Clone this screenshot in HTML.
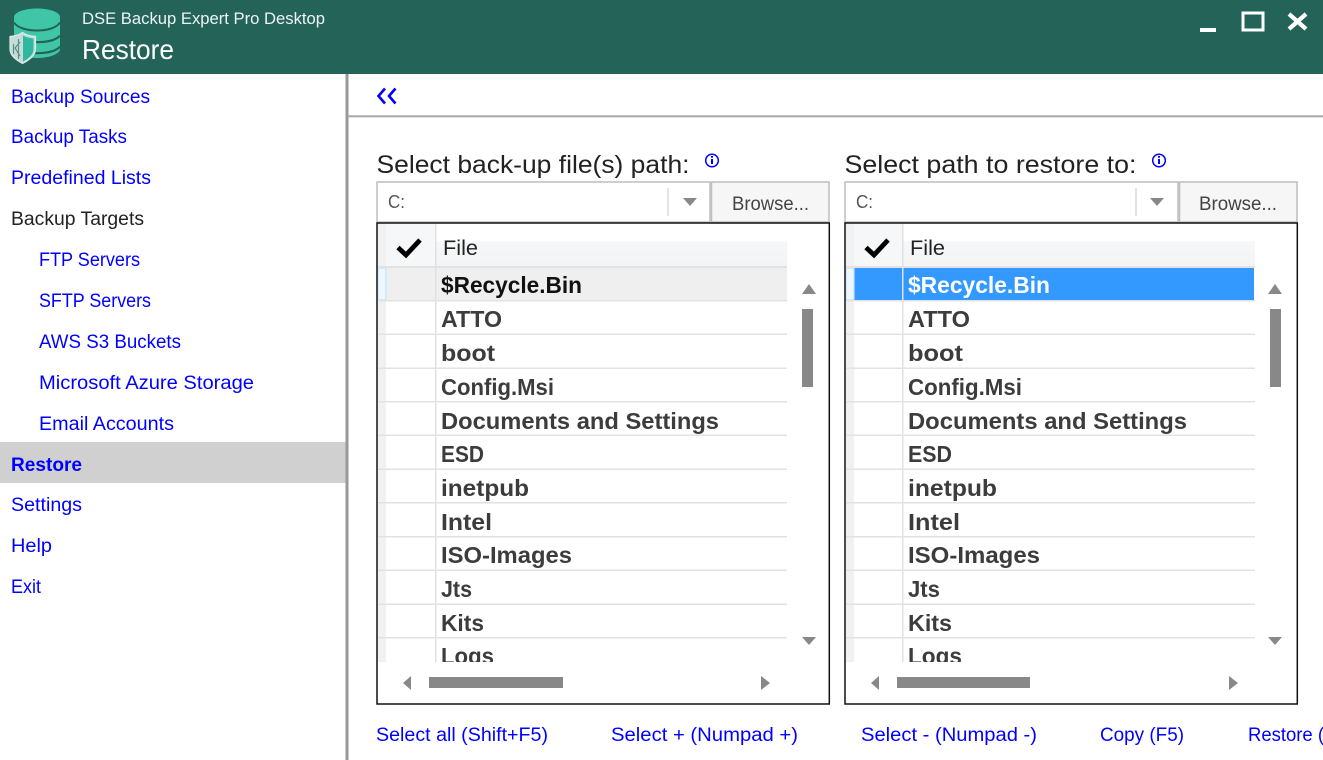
<!DOCTYPE html>
<html><head><meta charset="utf-8"><title>Restore</title>
<style>
html,body{margin:0;padding:0;background:#fff;width:1323px;height:760px;overflow:hidden}
svg{display:block;font-family:"Liberation Sans",sans-serif}
.n{font-size:19px;fill:#0000ff}
.r{font-size:23px;font-weight:bold;fill:#3c3c3c}
.sep{fill:#e2e2e2}
.g{fill:#888}
</style></head><body>
<svg width="1323" height="760" viewBox="0 0 1323 760" xmlns="http://www.w3.org/2000/svg">
<defs>
<linearGradient id="hd" x1="0" y1="0" x2="0" y2="1"><stop offset="0" stop-color="#fff"/><stop offset=".38" stop-color="#fff"/><stop offset=".42" stop-color="#f6f7f8"/><stop offset="1" stop-color="#f3f4f5"/></linearGradient>
<clipPath id="cl"><rect x="378" y="224" width="409" height="438"/></clipPath>
<clipPath id="cr"><rect x="846" y="224" width="409" height="438"/></clipPath>
</defs>
<rect width="1323" height="74" fill="#236358"/>
<!-- logo -->
<path d="M14 17C14 12 25 8.500 37 8.500S60 12 60 17V49C60 54 49 58 37 58S14 54 14 49Z" fill="#3fc6a6"/>
<path d="M14 22.500C18 28.500 28 30.500 37 30.500S56 28.500 60 22.500" fill="none" stroke="#236358" stroke-width="2"/>
<path d="M30 41.500C33 42 35 42.200 37 42.200C46 42.200 56 40.500 60 35.500" fill="none" stroke="#236358" stroke-width="2.200"/>
<path d="M30 52.500C33 53 35 53.200 37 53.200C46 53.200 56 51.500 60 46.500" fill="none" stroke="#236358" stroke-width="2.200"/>
<path d="M10 36.500C16 36 20 34.500 22.500 32.500C25 34.500 29 36 35.500 36.500V49C35.500 56 28 60.500 22.500 63.500C17 60.500 10 56 10 49Z" fill="#c4dcd8" stroke="#dcebe8" stroke-width="1.200"/>
<path d="M23 35.500C25.500 37 29 38 33.500 38.500V49C33.500 55 28 59 23 61.500Z" fill="#2fb8a0"/>
<path d="M13.500 44V54M20 42L15 48L20 56M18.500 39V59" stroke="#5f8f88" stroke-width="1.200" fill="none"/>
<text x="82" y="24" font-size="17" fill="#eef4f3" textLength="243" lengthAdjust="spacingAndGlyphs">DSE Backup Expert Pro Desktop</text>
<text x="82" y="59" font-size="28" fill="#fff" textLength="92" lengthAdjust="spacingAndGlyphs">Restore</text>
<rect x="1200" y="28" width="16" height="4" fill="#fff"/>
<path d="M1243 13H1263V30H1243Z" fill="none" stroke="#fff" stroke-width="3"/>
<path d="M1289 14L1306 29M1306 14L1289 29" stroke="#fff" stroke-width="4.200" fill="none"/>
<!-- sidebar -->
<rect x="0" y="442" width="346" height="41" fill="#d0d0d0"/>
<rect x="345.500" y="74" width="3" height="686" fill="#999"/>
<text class="n" x="11" y="103" textLength="139" lengthAdjust="spacingAndGlyphs">Backup Sources</text>
<text class="n" x="11" y="143" textLength="116" lengthAdjust="spacingAndGlyphs">Backup Tasks</text>
<text class="n" x="11" y="184" textLength="140" lengthAdjust="spacingAndGlyphs">Predefined Lists</text>
<text class="n" x="11" y="225" textLength="133" lengthAdjust="spacingAndGlyphs" style="fill:#222">Backup Targets</text>
<text class="n" x="39" y="266" textLength="101" lengthAdjust="spacingAndGlyphs">FTP Servers</text>
<text class="n" x="39" y="307" textLength="112" lengthAdjust="spacingAndGlyphs">SFTP Servers</text>
<text class="n" x="39" y="348" textLength="142" lengthAdjust="spacingAndGlyphs">AWS S3 Buckets</text>
<text class="n" x="39" y="389" textLength="215" lengthAdjust="spacingAndGlyphs">Microsoft Azure Storage</text>
<text class="n" x="39" y="430" textLength="135" lengthAdjust="spacingAndGlyphs">Email Accounts</text>
<text class="n" x="11" y="471" textLength="71" lengthAdjust="spacingAndGlyphs" font-weight="bold">Restore</text>
<text class="n" x="11" y="511" textLength="71" lengthAdjust="spacingAndGlyphs">Settings</text>
<text class="n" x="11" y="552" textLength="41" lengthAdjust="spacingAndGlyphs">Help</text>
<text class="n" x="11" y="593" textLength="30" lengthAdjust="spacingAndGlyphs">Exit</text>
<!-- top toolbar -->
<rect x="348" y="115.300" width="975" height="2" fill="#a8a8a8"/>
<path d="M385 88.500L378.500 96L385 103.500M395.500 88.500L389 96L395.500 103.500" fill="none" stroke="#0000ff" stroke-width="2.600"/>
<!-- labels -->
<text x="376.500" y="173" font-size="25" fill="#222" textLength="313" lengthAdjust="spacingAndGlyphs">Select back-up file(s) path:</text>
<text x="844.500" y="173" font-size="25" fill="#222" textLength="292" lengthAdjust="spacingAndGlyphs">Select path to restore to:</text>
<circle cx="712" cy="160.500" r="6.300" fill="#fff" stroke="#0000ff" stroke-width="1.500"/>
<path d="M712 156v1.800M712 159v5" stroke="#0000ff" stroke-width="2"/>
<circle cx="1159" cy="160.500" r="6.300" fill="#fff" stroke="#0000ff" stroke-width="1.500"/>
<path d="M1159 156v1.800M1159 159v5" stroke="#0000ff" stroke-width="2"/>
<!-- combos -->
<rect x="377" y="182" width="333" height="40" fill="#fff" stroke="#bdbdbd" stroke-width="1.500"/>
<rect x="711.500" y="182" width="117.500" height="40" fill="#f6f6f6" stroke="#bdbdbd" stroke-width="1.500"/>
<text x="388" y="208" font-size="18" fill="#555" textLength="17" lengthAdjust="spacingAndGlyphs">C:</text>
<rect x="667" y="188" width="2" height="28" fill="#e4e4e4"/>
<path d="M683 198H697L690 206Z" class="g"/>
<text x="732" y="210" font-size="19" fill="#444" textLength="77" lengthAdjust="spacingAndGlyphs">Browse...</text>
<rect x="845" y="182" width="333" height="40" fill="#fff" stroke="#bdbdbd" stroke-width="1.500"/>
<rect x="1179.500" y="182" width="117.500" height="40" fill="#f6f6f6" stroke="#bdbdbd" stroke-width="1.500"/>
<text x="856" y="208" font-size="18" fill="#555" textLength="17" lengthAdjust="spacingAndGlyphs">C:</text>
<rect x="1135" y="188" width="2" height="28" fill="#e4e4e4"/>
<path d="M1150 198H1164L1157 206Z" class="g"/>
<text x="1199" y="210" font-size="19" fill="#444" textLength="78" lengthAdjust="spacingAndGlyphs">Browse...</text>
<!-- LEFT GRID -->
<rect x="377" y="223" width="452.300" height="481" fill="#fff" stroke="#111" stroke-width="1.500"/>
<g clip-path="url(#cl)">
<rect x="378" y="224" width="8" height="438" fill="#f1f1f1"/>
<rect x="386" y="224" width="402" height="43" fill="url(#hd)"/>
<rect x="386" y="224" width="49" height="43" fill="#f6f7f8"/>
<rect x="387" y="268" width="400" height="32" fill="#efefef"/>
<rect x="378" y="268" width="8" height="32" fill="#eef7fd" stroke="#bfe3f7" stroke-width="1.200"/>
<rect x="435" y="224" width="1.500" height="438" fill="#e0e0e0"/>
<path d="M398 247.500L406 255L420 240" fill="none" stroke="#000" stroke-width="4.800"/>
<text x="443" y="255" font-size="21" fill="#222" textLength="35" lengthAdjust="spacingAndGlyphs">File</text>
<rect class="sep" x="378" y="266" width="410" height="2"/>
<rect class="sep" x="378" y="300" width="410" height="1.500"/>
<rect class="sep" x="378" y="333.500" width="410" height="1.500"/>
<rect class="sep" x="378" y="367.500" width="410" height="1.500"/>
<rect class="sep" x="378" y="401" width="410" height="1.500"/>
<rect class="sep" x="378" y="434.500" width="410" height="1.500"/>
<rect class="sep" x="378" y="468.500" width="410" height="1.500"/>
<rect class="sep" x="378" y="502" width="410" height="1.500"/>
<rect class="sep" x="378" y="536" width="410" height="1.500"/>
<rect class="sep" x="378" y="569.500" width="410" height="1.500"/>
<rect class="sep" x="378" y="603.500" width="410" height="1.500"/>
<rect class="sep" x="378" y="637" width="410" height="1.500"/>
<text class="r" x="441" y="293" textLength="141" lengthAdjust="spacingAndGlyphs" style="fill:#111">$Recycle.Bin</text>
<text class="r" x="441" y="327" textLength="61" lengthAdjust="spacingAndGlyphs">ATTO</text>
<text class="r" x="441" y="361" textLength="54" lengthAdjust="spacingAndGlyphs">boot</text>
<text class="r" x="441" y="395" textLength="113" lengthAdjust="spacingAndGlyphs">Config.Msi</text>
<text class="r" x="441" y="429" textLength="278" lengthAdjust="spacingAndGlyphs">Documents and Settings</text>
<text class="r" x="441" y="462" textLength="43" lengthAdjust="spacingAndGlyphs">ESD</text>
<text class="r" x="441" y="496" textLength="88" lengthAdjust="spacingAndGlyphs">inetpub</text>
<text class="r" x="441" y="530" textLength="51" lengthAdjust="spacingAndGlyphs">Intel</text>
<text class="r" x="441" y="563" textLength="131" lengthAdjust="spacingAndGlyphs">ISO-Images</text>
<text class="r" x="441" y="597" textLength="31" lengthAdjust="spacingAndGlyphs">Jts</text>
<text class="r" x="441" y="631" textLength="43" lengthAdjust="spacingAndGlyphs">Kits</text>
<text class="r" x="441" y="664" textLength="53" lengthAdjust="spacingAndGlyphs">Logs</text>
</g>
<path d="M802 294H816L809 284Z" class="g"/>
<rect x="802" y="309" width="11" height="78" class="g"/>
<path d="M802 637H816L809 645Z" class="g"/>
<path d="M411 676V690L403 683Z" class="g"/>
<rect x="429" y="677" width="134" height="11" class="g"/>
<path d="M761 676V690L770 683Z" class="g"/>
<!-- RIGHT GRID -->
<rect x="845" y="223" width="452.300" height="481" fill="#fff" stroke="#111" stroke-width="1.500"/>
<g clip-path="url(#cr)">
<rect x="846" y="224" width="8" height="438" fill="#f1f1f1"/>
<rect x="854" y="224" width="402" height="43" fill="url(#hd)"/>
<rect x="854" y="224" width="49" height="43" fill="#f6f7f8"/>
<rect x="854" y="268" width="400" height="32" fill="#3399ff"/>
<rect x="846" y="268" width="8" height="32" fill="#eef7fd" stroke="#bfe3f7" stroke-width="1.200"/>
<rect x="902" y="224" width="1.500" height="438" fill="#e0e0e0"/>
<path d="M866 247.500L874 255L888 240" fill="none" stroke="#000" stroke-width="4.800"/>
<text x="910" y="255" font-size="21" fill="#222" textLength="35" lengthAdjust="spacingAndGlyphs">File</text>
<rect class="sep" x="846" y="266" width="410" height="2"/>
<rect class="sep" x="846" y="300" width="410" height="1.500"/>
<rect class="sep" x="846" y="333.500" width="410" height="1.500"/>
<rect class="sep" x="846" y="367.500" width="410" height="1.500"/>
<rect class="sep" x="846" y="401" width="410" height="1.500"/>
<rect class="sep" x="846" y="434.500" width="410" height="1.500"/>
<rect class="sep" x="846" y="468.500" width="410" height="1.500"/>
<rect class="sep" x="846" y="502" width="410" height="1.500"/>
<rect class="sep" x="846" y="536" width="410" height="1.500"/>
<rect class="sep" x="846" y="569.500" width="410" height="1.500"/>
<rect class="sep" x="846" y="603.500" width="410" height="1.500"/>
<rect class="sep" x="846" y="637" width="410" height="1.500"/>
<text class="r" x="908" y="293" textLength="142" lengthAdjust="spacingAndGlyphs" style="fill:#fff">$Recycle.Bin</text>
<text class="r" x="908" y="327" textLength="62" lengthAdjust="spacingAndGlyphs">ATTO</text>
<text class="r" x="908" y="361" textLength="55" lengthAdjust="spacingAndGlyphs">boot</text>
<text class="r" x="908" y="395" textLength="114" lengthAdjust="spacingAndGlyphs">Config.Msi</text>
<text class="r" x="908" y="429" textLength="279" lengthAdjust="spacingAndGlyphs">Documents and Settings</text>
<text class="r" x="908" y="462" textLength="44" lengthAdjust="spacingAndGlyphs">ESD</text>
<text class="r" x="908" y="496" textLength="89" lengthAdjust="spacingAndGlyphs">inetpub</text>
<text class="r" x="908" y="530" textLength="52" lengthAdjust="spacingAndGlyphs">Intel</text>
<text class="r" x="908" y="563" textLength="132" lengthAdjust="spacingAndGlyphs">ISO-Images</text>
<text class="r" x="908" y="597" textLength="32" lengthAdjust="spacingAndGlyphs">Jts</text>
<text class="r" x="908" y="631" textLength="44" lengthAdjust="spacingAndGlyphs">Kits</text>
<text class="r" x="908" y="664" textLength="54" lengthAdjust="spacingAndGlyphs">Logs</text>
</g>
<path d="M1268 294H1282L1275 284Z" class="g"/>
<rect x="1270" y="309" width="11" height="78" class="g"/>
<path d="M1268 637H1282L1275 645Z" class="g"/>
<path d="M879 676V690L871 683Z" class="g"/>
<rect x="897" y="677" width="133" height="11" class="g"/>
<path d="M1229 676V690L1238 683Z" class="g"/>
<!-- bottom links -->
<text class="n" x="376" y="741" textLength="172" lengthAdjust="spacingAndGlyphs">Select all (Shift+F5)</text>
<text class="n" x="611" y="741" textLength="187" lengthAdjust="spacingAndGlyphs">Select + (Numpad +)</text>
<text class="n" x="861" y="741" textLength="176" lengthAdjust="spacingAndGlyphs">Select - (Numpad -)</text>
<text class="n" x="1100" y="741" textLength="84" lengthAdjust="spacingAndGlyphs">Copy (F5)</text>
<text class="n" x="1248" y="741" textLength="76" lengthAdjust="spacingAndGlyphs">Restore (</text>
</svg>
</body></html>
